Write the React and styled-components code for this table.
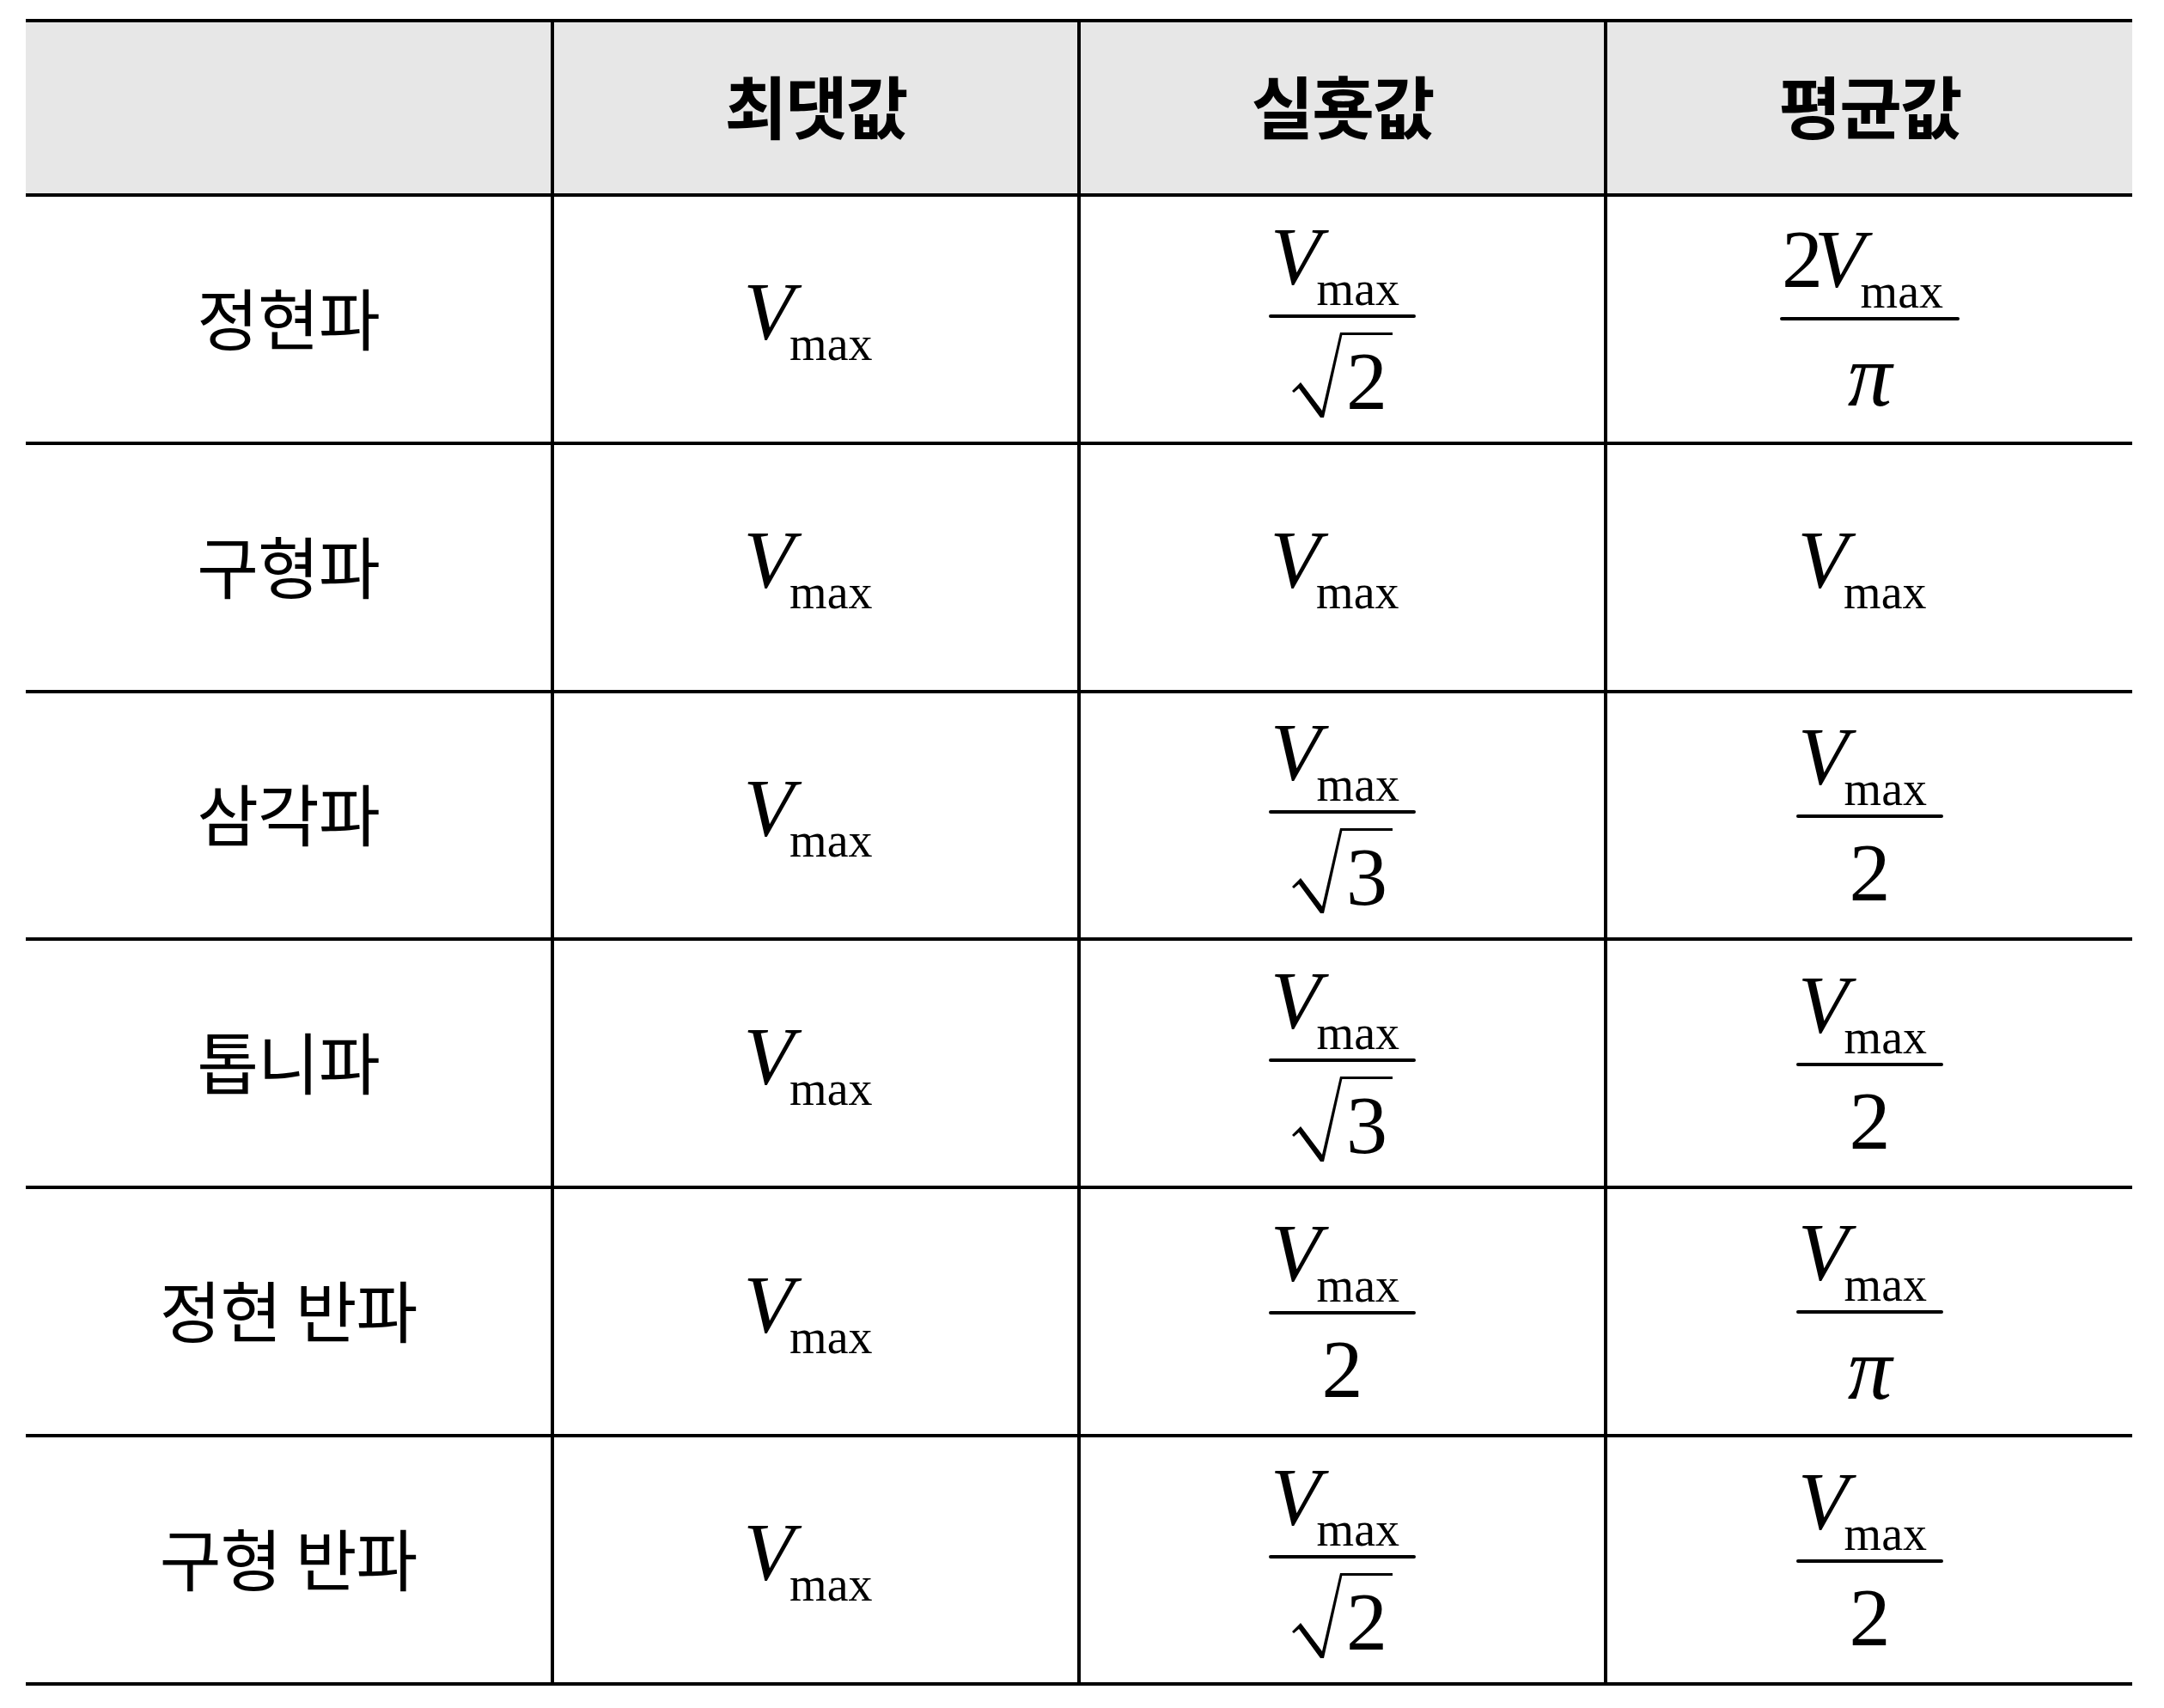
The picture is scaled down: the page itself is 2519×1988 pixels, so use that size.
import React from "react";
import styled, { createGlobalStyle } from "styled-components";

const GlobalStyle = createGlobalStyle`
  html, body {
    margin: 0;
    padding: 0;
    background: #fff;
  }
  body {
    font-family: "Noto Sans CJK KR", "Noto Sans", sans-serif;
    color: #000;
  }
`;

const Page = styled.div`
  padding: 22px 0 0 30px;
`;

const Table = styled.div`
  display: grid;
  grid-template-columns: 611px 613px 613px 615px;
  width: 2452px;
  border-top: 4px solid #000;
`;

const Cell = styled.div`
  box-sizing: border-box;
  height: ${p => (p.$head ? "203px" : "288.8px")};
  border-bottom: 4px solid #000;
  border-left: ${p => (p.$first ? "none" : "4px solid #000")};
  background: ${p => (p.$head ? "#e7e7e7" : "#fff")};
  display: flex;
  align-items: center;
  justify-content: center;
`;

const HeadText = styled.span`
  font-size: 79px;
  font-weight: 700;
  letter-spacing: -2px;
  white-space: nowrap;
  padding-bottom: 9px;
`;

const Label = styled.span`
  font-size: 78px;
  font-weight: 400;
  letter-spacing: -1px;
  white-space: pre;
  padding-bottom: 7px;
`;

// equation parts
const Expr = styled.span`
  font-family: "Liberation Serif", "Times New Roman", serif;
  font-size: 96px;
  line-height: 96px;
  display: inline-flex;
  flex-direction: column;
  align-items: center;
  white-space: nowrap;
`;

const Line = styled.span`
  display: block;
  line-height: 96px;
  padding: ${p => p.$pad || "0"};
`;

const Var = styled.i`
  font-style: italic;
  font-size: ${p => p.$size || "inherit"};
  margin-left: ${p => (p.$tight ? "-10px" : "0")};
`;

const Sub = styled.span`
  font-size: 56px;
  line-height: 0;
  vertical-align: -24px;
  margin-left: -5px;
`;

const Bar = styled.span`
  align-self: stretch;
  height: 4px;
  background: #000;
  border-radius: 2px;
`;

const Radical = styled.span`
  display: flex;
  align-items: flex-start;
  padding-top: 17px;
`;

const Radicand = styled.span`
  display: block;
  border-top: 3px solid #000;
  margin-left: -2px;
  padding: 6px 6px 0;
  line-height: 96px;
`;

const RadicalSign = () => (
  <svg width="59" height="99" viewBox="0 0 59 99">
    <path
      d="M0 68 L10 58 L35 91 L56 0 L59 0 L37 99 L33 99 L8 65 L2 70 Z"
      fill="#000"
    />
  </svg>
);

const VMax = ({ coef }) => (
  <>
    {coef}
    <Var $tight={!!coef}>V</Var>
    <Sub>max</Sub>
  </>
);

const Plain = () => (
  <Expr>
    <Line $pad="0 18px 16px 0">
      <VMax />
    </Line>
  </Expr>
);

const Frac = ({ coef, den }) => (
  <Expr>
    <Line $pad="0 19px 19px 2px">
      <VMax coef={coef} />
    </Line>
    <Bar />
    {den.sqrt ? (
      <Radical>
        <RadicalSign />
        <Radicand>{den.sqrt}</Radicand>
      </Radical>
    ) : (
      <Line $pad="16px 0 0">
        {den.italic ? <Var $size="103px">{den.text}</Var> : den.text}
      </Line>
    )}
  </Expr>
);

const SQRT2 = { sqrt: "2" };
const SQRT3 = { sqrt: "3" };
const TWO = { text: "2" };
const PI = { text: "π", italic: true };

const rows = [
  { name: "정현파", rms: <Frac den={SQRT2} />, avg: <Frac coef="2" den={PI} /> },
  { name: "구형파", rms: <Plain />, avg: <Plain /> },
  { name: "삼각파", rms: <Frac den={SQRT3} />, avg: <Frac den={TWO} /> },
  { name: "톱니파", rms: <Frac den={SQRT3} />, avg: <Frac den={TWO} /> },
  { name: "정현 반파", rms: <Frac den={TWO} />, avg: <Frac den={PI} /> },
  { name: "구형 반파", rms: <Frac den={SQRT2} />, avg: <Frac den={TWO} /> }
];

const headers = ["", "최댓값", "실횻값", "평균값"];

export default function App() {
  return (
    <Page>
      <GlobalStyle />
      <Table>
        {headers.map((h, i) => (
          <Cell key={"h" + i} $head $first={i === 0}>
            <HeadText>{h}</HeadText>
          </Cell>
        ))}
        {rows.map(row => (
          <React.Fragment key={row.name}>
            <Cell $first>
              <Label>{row.name}</Label>
            </Cell>
            <Cell>
              <Plain />
            </Cell>
            <Cell>{row.rms}</Cell>
            <Cell>{row.avg}</Cell>
          </React.Fragment>
        ))}
      </Table>
    </Page>
  );
}
